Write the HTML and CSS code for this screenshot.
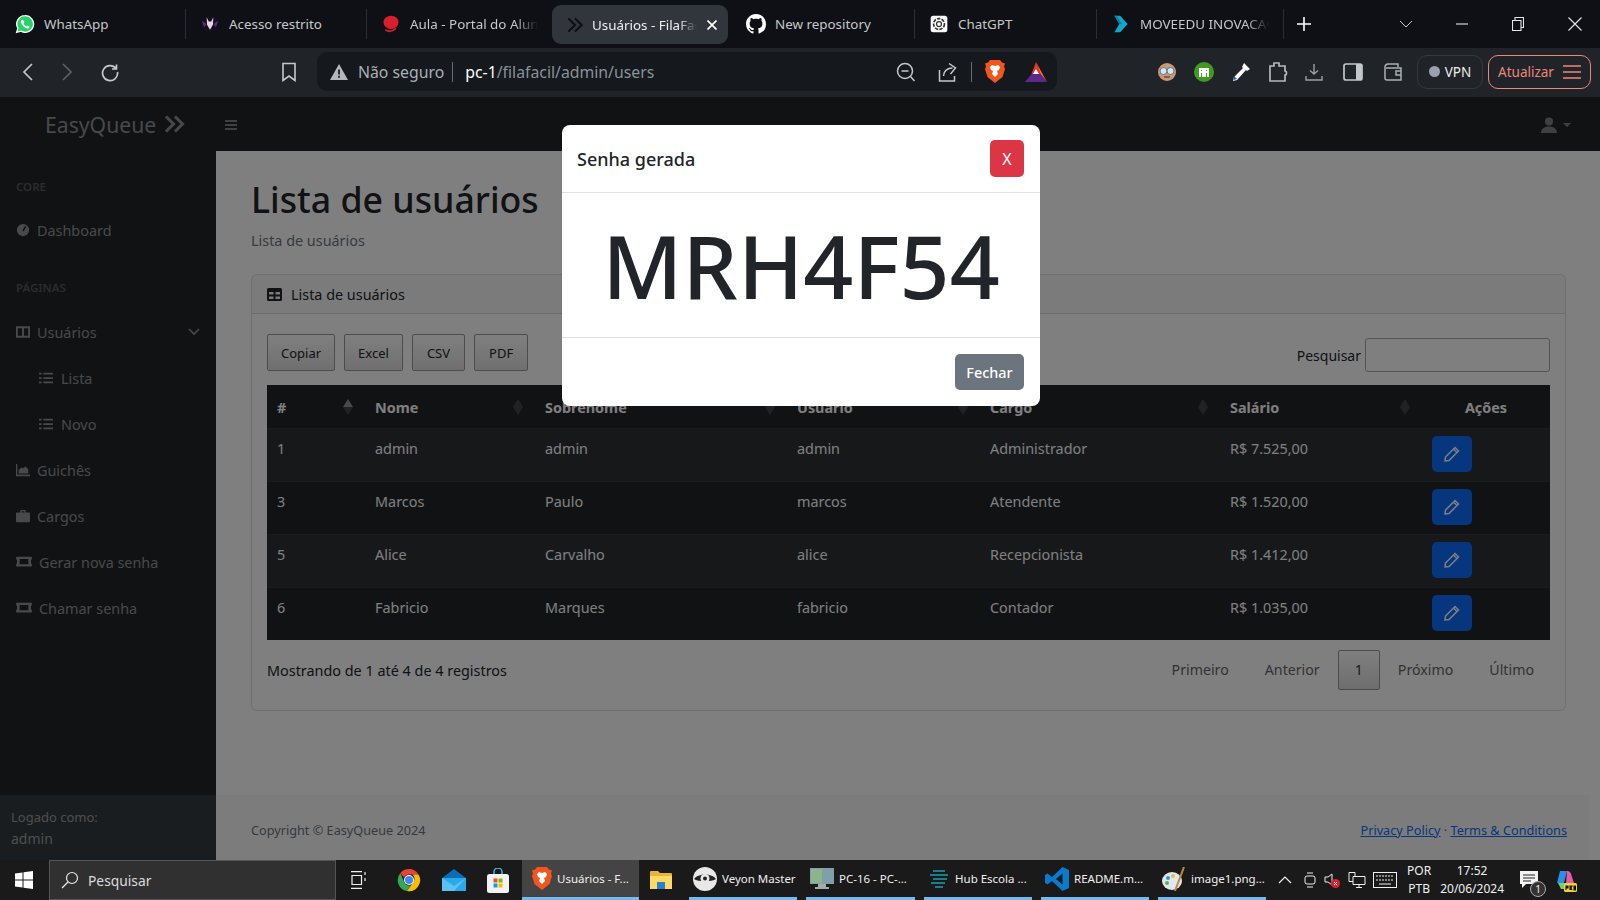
FILE: index.html
```html
<!DOCTYPE html>
<html lang="pt-BR">
<head>
    <meta charset="UTF-8">
    <title>Usuários - FilaFacil</title>
    <link rel="stylesheet" href="styles.css">
</head>
<body>
<div class="tabs">
    <div class="tab tab-first"><svg class="fav" viewBox="0 0 24 24"><path fill="#25d366" stroke="#fff" stroke-width="1.6" d="M12 2a10 10 0 0 0-8.6 15L2 22l5.2-1.4A10 10 0 1 0 12 2z"/><path fill="#fff" d="M8.6 7c-.5 0-1.400.8-1.400 2.300 0 3 3.800 7.500 7.600 8 1.600.2 2.700-.9 2.800-2 0-.4-2.200-1.700-2.600-1.500l-1 1.200c-1.600-.5-3-2-3.700-3.500l.9-1.100c.2-.4-.8-2.900-1.200-2.900z"/></svg><span class="tab-text">WhatsApp</span></div>
    <div class="tab"><svg class="fav" viewBox="0 0 24 24"><circle cx="12" cy="12" r="10" fill="#15101c"/><path fill="#5a2a8a" d="M2 8l6 4-3 4zM22 8l-6 4 3 4z"/><path fill="#e6d8e0" d="M8 4l2.500 5h3L16 4l-.5 9-3.500 6-3.500-6z"/></svg><span class="tab-text">Acesso restrito</span></div>
    <div class="tab"><svg class="fav" viewBox="0 0 24 24"><ellipse cx="12" cy="10" rx="9" ry="8" fill="#d8202c"/><path fill="none" stroke="#d8202c" stroke-width="2" d="M5 19c4 3 9 2 13-2"/></svg><span class="tab-text fade">Aula - Portal do Aluno</span></div>
    <div class="tab active"><svg class="fav" viewBox="0 0 24 24"><path fill="none" stroke="#0c0e12" stroke-width="2.400" d="M4 4l8 8-8 8M12 4l8 8-8 8"/></svg><span class="tab-text fade">Usuários - FilaFacil</span><svg class="tab-close" width="10" height="10" viewBox="0 0 10 10"><path stroke="#fff" stroke-width="1.700" d="M.5.5l9 9M9.500.5l-9 9"/></svg></div>
    <div class="tab tab-wide"><svg class="fav" viewBox="0 0 16 16"><path fill="#fff" d="M8 0C3.580 0 0 3.580 0 8c0 3.540 2.290 6.530 5.470 7.590.4.070.55-.17.55-.38 0-.19-.01-.82-.01-1.490-2.010.37-2.530-.49-2.690-.94-.09-.23-.48-.94-.82-1.130-.28-.15-.68-.52-.01-.53.63-.01 1.080.58 1.230.82.72 1.210 1.870.87 2.330.66.07-.52.28-.87.51-1.070-1.780-.2-3.640-.89-3.640-3.950 0-.87.31-1.590.82-2.150-.08-.2-.36-1.020.08-2.120 0 0 .67-.21 2.200.82.64-.18 1.320-.27 2-.27.68 0 1.360.09 2 .27 1.530-1.040 2.200-.82 2.200-.82.44 1.100.16 1.920.08 2.120.51.56.82 1.270.82 2.150 0 3.070-1.870 3.750-3.650 3.950.29.25.54.73.54 1.480 0 1.070-.01 1.930-.01 2.200 0 .21.15.46.55.38A8.013 8.013 0 0 0 16 8c0-4.420-3.580-8-8-8z"/></svg><span class="tab-text">New repository</span></div>
    <div class="tab"><svg class="fav" viewBox="0 0 24 24"><rect x="2" y="2" width="20" height="20" rx="3" fill="#fff"/><circle cx="12" cy="12" r="6.500" fill="none" stroke="#333" stroke-width="2" stroke-dasharray="4 1.500"/><circle cx="12" cy="12" r="3" fill="none" stroke="#333" stroke-width="1.500"/></svg><span class="tab-text">ChatGPT</span></div>
    <div class="tab"><svg class="fav" viewBox="0 0 24 24"><path fill="#12a5c9" d="M4 2h7l9 10-9 10H4l6-10z"/><path fill="#0b7f9c" d="M4 2h3l6 10H10z"/></svg><span class="tab-text fade">MOVEEDU INOVACAO</span></div>
    <div class="new-tab"><svg width="16" height="16" viewBox="0 0 16 16"><path stroke="#fff" stroke-width="1.600" d="M8 1v14M1 8h14"/></svg></div>
    <div class="win-btns">
        <svg class="chevron-win" width="14" height="8" viewBox="0 0 14 8"><path fill="none" stroke="#c8cacc" d="M1 1l6 6 6-6"/></svg>
        <svg width="12" height="12" viewBox="0 0 12 12"><path stroke="#e6e6e6" stroke-width="1.100" d="M0 6h12"/></svg>
        <svg width="12" height="14" viewBox="0 0 12 14"><path fill="none" stroke="#e6e6e6" stroke-width="1.100" d="M.5 3.500h8.500v10H.5zM3 3.500V.5h8.500v10H9"/></svg>
        <svg width="14" height="14" viewBox="0 0 14 14"><path stroke="#e6e6e6" stroke-width="1.100" d="M.5.5l13 13M13.500.5l-13 13"/></svg>
    </div>
</div>

<div class="toolbar">
    <div class="nav-btns">
        <svg width="12" height="18" viewBox="0 0 12 18"><path fill="none" stroke="#c4c8cc" stroke-width="1.700" d="M10 1L2 9l8 8"/></svg>
        <svg width="12" height="18" viewBox="0 0 12 18"><path fill="none" stroke="#5c6166" stroke-width="1.700" d="M2 1l8 8-8 8"/></svg>
        <svg width="20" height="20" viewBox="0 0 20 20"><path fill="none" stroke="#c4c8cc" stroke-width="1.700" d="M16 6.500A7.500 7.500 0 1 0 17.500 10M16.500 2.500v4.500H12"/></svg>
    </div>
    <svg class="bookmark" width="16" height="20" viewBox="0 0 16 20"><path fill="none" stroke="#c4c8cc" stroke-width="1.600" d="M2 1.500h12v17l-6-4.500-6 4.500z"/></svg>
    <div class="address">
        <svg width="18" height="16" viewBox="0 0 18 16"><path fill="#b4b8bc" d="M9 0l9 16H0z"/><path stroke="#15181c" stroke-width="1.700" d="M9 5.500v5M9 11.800v2"/></svg>
        <span class="not-secure">Não seguro</span>
        <span class="addr-sep"></span>
        <span class="url"><b>pc-1</b>/filafacil/admin/users</span>
        <span class="addr-icons">
            <svg width="20" height="20" viewBox="0 0 20 20"><circle cx="9" cy="9" r="7.500" fill="none" stroke="#c4c8cc" stroke-width="1.500"/><path stroke="#c4c8cc" stroke-width="1.500" d="M5.500 9h7M14.500 14.500l4 4.500"/></svg>
            <svg class="ic-share" width="20" height="20" viewBox="0 0 20 20"><path fill="none" stroke="#c4c8cc" stroke-width="1.500" d="M1.500 8v11h15v-5M5.500 14c0-5 4-8 9-8M11 1.500l6.500 4.500-5 6"/></svg>
            <span class="addr-sep small"></span>
            <svg class="ic-brave" width="20" height="23" viewBox="0 0 20 23"><path fill="#f1561f" d="M5 0h10l2 2.500 3 1-1 3 1 2.500-2.500 8L10 23l-7.500-6L0 9l1-2.500-1-3 3-1z"/><path fill="#fff" d="M10 6l3-1 2 2-1 3-2 1 1 3-3 3-3-3 1-3-2-1-1-3 2-2z"/></svg>
            <svg class="ic-rewards" width="22" height="20" viewBox="0 0 22 20"><path fill="#e8352f" d="M11 0l4.500 12h-9z"/><path fill="#ff6a2b" d="M11 0l11 20-6.500-8z"/><path fill="#5b2a8a" d="M0 20h22l-6.500-8h-9z"/><path fill="#fff" d="M11 7l3 5H8z"/></svg>
        </span>
    </div>
    <div class="extensions">
        <svg width="20" height="20" viewBox="0 0 20 20"><circle cx="10" cy="10" r="9" fill="#c69a78"/><circle cx="6.500" cy="9" r="3.500" fill="#d5e6ee" stroke="#5f7a8a"/><circle cx="13.500" cy="9" r="3.500" fill="#d5e6ee" stroke="#5f7a8a"/><path stroke="#7a4a2a" stroke-width="1.500" d="M7 15h6"/></svg>
        <svg width="20" height="20" viewBox="0 0 20 20"><circle cx="10" cy="10" r="10" fill="#3f9a22"/><path fill="none" stroke="#fff" stroke-width="2" d="M6 15V7h3v8M11 15V7h3v8M6 10h3M11 10h3"/></svg>
        <svg width="20" height="20" viewBox="0 0 20 20"><path fill="#fff" d="M13 1l6 6-3 2-1-1-9 10-4 1 1-4 9-9-1-1z"/><path fill="#2f55c0" d="M3 14l3 3-3.500 1z"/></svg>
        <svg width="20" height="22" viewBox="0 0 20 22"><path fill="none" stroke="#b4b8bc" stroke-width="1.700" d="M2 5h4V2h5v3h6v5c2 0 2 4 0 4v6H2z"/></svg>
        <svg width="18" height="18" viewBox="0 0 18 18"><path fill="none" stroke="#9ca0a4" stroke-width="1.400" d="M9 1v10M5 7.500L9 11l4-3.500M1 13v4h16v-4"/></svg>
        <svg class="ext-gap" width="20" height="18" viewBox="0 0 20 18"><rect x="1" y="1" width="18" height="16" rx="2" fill="none" stroke="#c0c8cc" stroke-width="1.700"/><rect x="13" y="1" width="6" height="16" fill="#c0c8cc"/></svg>
        <svg class="ext-gap" width="20" height="18" viewBox="0 0 20 18"><path fill="none" stroke="#a8b0b4" stroke-width="1.500" d="M2 4a3 3 0 0 1 3-3h10v3M2 4v11a2 2 0 0 0 2 2h14V5H3M18 8h-5v4h5"/></svg>
    </div>
    <div class="vpn"><span class="vpn-dot"></span>VPN</div>
    <div class="update">Atualizar <svg width="18" height="14" viewBox="0 0 18 14"><path stroke="#f0857a" stroke-width="1.600" d="M0 1h18M0 7h18M0 13h18"/></svg></div>
</div>

<div class="viewport">
    <nav class="topnav">
        <div class="brand">EasyQueue <svg width="22" height="18" viewBox="0 0 22 18"><path fill="none" stroke="currentColor" stroke-width="3" d="M2 1.500l7.500 7.500L2 16.500M11 1.500l7.500 7.500-7.500 7.500"/></svg></div>
        <svg class="burger" width="12" height="12" viewBox="0 0 12 12"><path stroke="#808080" stroke-width="1.800" d="M0 2h12M0 6h12M0 10h12"/></svg>
        <div class="user-menu"><svg width="16" height="16" viewBox="0 0 16 16"><circle cx="8" cy="4.500" r="4" fill="#808080"/><path fill="#808080" d="M0 16c0-4 3-6.500 8-6.500s8 2.500 8 6.500z"/></svg><span class="caret"></span></div>
    </nav>
    <div class="layout">
        <aside class="sidebar">
            <div class="side-menu">
                <div class="side-head">CORE</div>
                <a class="side-link"><svg viewBox="0 0 16 16"><circle cx="8" cy="8" r="7" fill="currentColor"/><path stroke="#111" stroke-width="1.500" d="M8 9l3-5"/></svg>Dashboard</a>
                <div class="side-head second">PÁGINAS</div>
                <a class="side-link"><svg viewBox="0 0 16 16"><path fill="none" stroke="currentColor" stroke-width="2.200" d="M1 2.500h14v11H1zM8 3v10"/></svg>Usuários<svg class="side-arrow" viewBox="0 0 12 8"><path fill="none" stroke="currentColor" stroke-width="1.600" d="M1 1l5 5 5-5"/></svg></a>
                <a class="side-link sub"><svg viewBox="0 0 16 16"><path stroke="currentColor" stroke-width="2" d="M0 3h3M5 3h11M0 8h3M5 8h11M0 13h3M5 13h11"/></svg>Lista</a>
                <a class="side-link sub"><svg viewBox="0 0 16 16"><path stroke="currentColor" stroke-width="2" d="M0 3h3M5 3h11M0 8h3M5 8h11M0 13h3M5 13h11"/></svg>Novo</a>
                <a class="side-link"><svg viewBox="0 0 16 16"><path fill="currentColor" d="M0 1h1.500v12H16v2H0zM3 12V8l3-3 2 1 3-2 3 3v5z"/></svg>Guichês</a>
                <a class="side-link"><svg viewBox="0 0 16 16"><path fill="currentColor" d="M5 1h6v3h4a1 1 0 0 1 1 1v9a1 1 0 0 1-1 1H1a1 1 0 0 1-1-1V5a1 1 0 0 1 1-1h4zm1.500 1.500V4h3V2.500z"/></svg>Cargos</a>
                <a class="side-link wide"><svg viewBox="0 0 18 16"><path fill="currentColor" fill-rule="evenodd" d="M1 2h16a1 1 0 0 1 1 1v2h-1v5h1v2a1 1 0 0 1-1 1H1a1 1 0 0 1-1-1v-2h1V5H0V3a1 1 0 0 1 1-1zm3 2.500v6h10v-6z"/></svg>Gerar nova senha</a>
                <a class="side-link wide"><svg viewBox="0 0 18 16"><path fill="currentColor" fill-rule="evenodd" d="M1 2h16a1 1 0 0 1 1 1v2h-1v5h1v2a1 1 0 0 1-1 1H1a1 1 0 0 1-1-1v-2h1V5H0V3a1 1 0 0 1 1-1zm3 2.500v6h10v-6z"/></svg>Chamar senha</a>
            </div>
            <div class="side-footer">
                <div class="logged">Logado como:</div>
                <div>admin</div>
            </div>
        </aside>
        <main class="main">
            <div class="content">
                <h1>Lista de usuários</h1>
                <p class="crumb">Lista de usuários</p>
                <section class="card">
                    <div class="card-head"><svg width="15" height="13" viewBox="0 0 15 13"><path fill="#212529" fill-rule="evenodd" d="M1.500 0h12A1.500 1.500 0 0 1 15 1.500v10a1.500 1.500 0 0 1-1.500 1.500h-12A1.500 1.500 0 0 1 0 11.500v-10A1.500 1.500 0 0 1 1.500 0zM2 4v2.500h4.500V4zm6.500 0v2.500H13V4zM2 8.500V11h4.500V8.500zm6.500 0V11H13V8.500z"/></svg>Lista de usuários</div>
                    <div class="card-body">
                        <div class="dt-top">
                            <div class="dt-buttons">
                                <button class="dt-btn">Copiar</button>
                                <button class="dt-btn">Excel</button>
                                <button class="dt-btn">CSV</button>
                                <button class="dt-btn">PDF</button>
                            </div>
                            <label class="dt-search">Pesquisar <input type="text"></label>
                        </div>
                        <table class="users">
                            <colgroup>
                                <col class="c-id"><col class="c-name"><col class="c-last"><col class="c-user"><col class="c-role"><col class="c-pay"><col>
                            </colgroup>
                            <thead>
                                <tr>
                                    <th class="sort up">#</th>
                                    <th class="sort">Nome</th>
                                    <th class="sort">Sobrenome</th>
                                    <th class="sort">Usuário</th>
                                    <th class="sort">Cargo</th>
                                    <th class="sort">Salário</th>
                                    <th class="center">Ações</th>
                                </tr>
                            </thead>
                            <tbody>
                                <tr>
                                    <td>1</td><td>admin</td><td>admin</td><td>admin</td><td>Administrador</td><td>R$ 7.525,00</td>
                                    <td><button class="edit"><svg width="16" height="16" viewBox="0 0 16 16"><path fill="none" stroke="#fff" stroke-width="1.500" d="M11 1.500l3.500 3.500L5 14.500l-4 .5.500-4zM9.500 3l3.500 3.500"/></svg></button></td>
                                </tr>
                                <tr>
                                    <td>3</td><td>Marcos</td><td>Paulo</td><td>marcos</td><td>Atendente</td><td>R$ 1.520,00</td>
                                    <td><button class="edit"><svg width="16" height="16" viewBox="0 0 16 16"><path fill="none" stroke="#fff" stroke-width="1.500" d="M11 1.500l3.500 3.500L5 14.500l-4 .5.500-4zM9.500 3l3.500 3.500"/></svg></button></td>
                                </tr>
                                <tr>
                                    <td>5</td><td>Alice</td><td>Carvalho</td><td>alice</td><td>Recepcionista</td><td>R$ 1.412,00</td>
                                    <td><button class="edit"><svg width="16" height="16" viewBox="0 0 16 16"><path fill="none" stroke="#fff" stroke-width="1.500" d="M11 1.500l3.500 3.500L5 14.500l-4 .5.500-4zM9.500 3l3.500 3.500"/></svg></button></td>
                                </tr>
                                <tr>
                                    <td>6</td><td>Fabricio</td><td>Marques</td><td>fabricio</td><td>Contador</td><td>R$ 1.035,00</td>
                                    <td><button class="edit"><svg width="16" height="16" viewBox="0 0 16 16"><path fill="none" stroke="#fff" stroke-width="1.500" d="M11 1.500l3.500 3.500L5 14.500l-4 .5.500-4zM9.500 3l3.500 3.500"/></svg></button></td>
                                </tr>
                            </tbody>
                        </table>
                        <div class="dt-bottom">
                            <div>Mostrando de 1 até 4 de 4 registros</div>
                            <div class="pager">
                                <a>Primeiro</a><a>Anterior</a><a class="current">1</a><a>Próximo</a><a>Último</a>
                            </div>
                        </div>
                    </div>
                </section>
            </div>
            <footer class="foot">
                <span>Copyright © EasyQueue 2024</span>
                <span><a href="#">Privacy Policy</a> · <a href="#">Terms &amp; Conditions</a></span>
            </footer>
        </main>
    </div>

    <div class="backdrop"></div>
    <div class="modal">
        <div class="modal-head">
            <span class="modal-title">Senha gerada</span>
            <button class="modal-x">X</button>
        </div>
        <div class="modal-body">MRH4F54</div>
        <div class="modal-foot"><button class="modal-close">Fechar</button></div>
    </div>
</div>

<div class="taskbar">
    <svg class="winlogo" width="18" height="18" viewBox="0 0 18 18"><path fill="#fff" d="M0 2.500L7.500 1.500v7H0zM8.500 1.300L18 0v8.500H8.500zM0 9.500h7.500v7L0 15.500zM8.500 9.500H18V18l-9.500-1.300z"/></svg>
    <div class="task-search"><svg width="18" height="18" viewBox="0 0 18 18"><circle cx="11" cy="7" r="5.500" fill="none" stroke="#e8e8e8" stroke-width="1.200"/><path stroke="#e8e8e8" stroke-width="1.200" d="M7 11l-6 6"/></svg>Pesquisar</div>
    <div class="task-pins">
        <svg class="pin-first" width="16" height="18" viewBox="0 0 16 18"><path fill="none" stroke="#f0f0f0" stroke-width="1.200" d="M0 .6h11M0 17.400h11M1 4.500h9.500v9H1zM14 1v3M14 7v3"/></svg>
        <svg width="24" height="24" viewBox="0 0 24 24"><path fill="#ea4335" d="M12 1a11 11 0 0 1 9.500 5.500H12a5.500 5.500 0 0 0-5 3L3.400 5A11 11 0 0 1 12 1z"/><path fill="#34a853" d="M3.400 5L7.500 15a5.500 5.500 0 0 0 6 2.300L10 23A11 11 0 0 1 3.400 5z"/><path fill="#fbbc05" d="M21.500 6.500A11 11 0 0 1 10 23l5.500-8a5.500 5.500 0 0 0 0-8.500z"/><circle cx="12" cy="12" r="5" fill="#fff"/><circle cx="12" cy="12" r="4" fill="#4285f4"/></svg>
        <svg width="24" height="24" viewBox="0 0 24 24"><path fill="#0b6cb8" d="M12 1L0 10h24z"/><path fill="#29a8ea" d="M0 10h24v13H0z"/><path fill="#7fd4f8" d="M0 10l12 8 12-8-12 13H0z" opacity=".6"/></svg>
        <svg width="22" height="25" viewBox="0 0 22 25"><path fill="none" stroke="#3fb8e6" stroke-width="1.500" d="M7 7V4a4 4 0 0 1 8 0v3"/><rect x="0" y="6" width="22" height="19" rx="2.500" fill="#f2f2f2"/><path fill="#f25022" d="M6.500 10.500h4v4h-4z"/><path fill="#7fba00" d="M11.500 10.500h4v4h-4z"/><path fill="#00a4ef" d="M6.500 15.500h4v4h-4z"/><path fill="#ffb900" d="M11.500 15.500h4v4h-4z"/></svg>
    </div>
    <div class="task-app current app-brave"><svg width="20" height="23" viewBox="0 0 20 23"><path fill="#f1561f" d="M5 0h10l2 2.500 3 1-1 3 1 2.500-2.500 8L10 23l-7.500-6L0 9l1-2.500-1-3 3-1z"/><path fill="#fff" d="M10 6l3-1 2 2-1 3-2 1 1 3-3 3-3-3 1-3-2-1-1-3 2-2z"/></svg>Usuários - F...</div>
    <svg class="explorer" width="22" height="20" viewBox="0 0 22 20"><path fill="#e8b53a" d="M0 2a1 1 0 0 1 1-1h7l2 2h11a1 1 0 0 1 1 1v15H0z"/><path fill="#ffd966" d="M0 6h22v13H0z"/><path fill="#2a7fd0" d="M7 12h8v7H7z"/></svg>
    <div class="task-app app-veyon"><svg width="24" height="24" viewBox="0 0 24 24"><circle cx="12" cy="12" r="12" fill="#e8e8e8"/><path fill="#222" d="M1 12c4-6 18-6 22 0-4 3-18 3-22 0z"/><circle cx="12" cy="11.500" r="4.500" fill="#e8e8e8"/><circle cx="12" cy="11.500" r="2" fill="#222"/></svg>Veyon Master</div>
    <div class="task-app app-pc"><svg width="24" height="22" viewBox="0 0 24 22"><rect width="24" height="16" fill="#7fa0a8"/><rect x="1" y="1" width="11" height="14" fill="#8fb48a"/><path fill="#aaa" d="M8 16h8v3H8zM5 19h14v2H5z"/></svg>PC-16 - PC-...</div>
    <div class="task-app app-hub"><svg width="22" height="22" viewBox="0 0 22 22"><path fill="none" stroke="#1c7d8a" stroke-width="1.800" d="M5 3h12M2 7h18M5 11h14M3 15h14M7 19h8"/></svg>Hub Escola ...</div>
    <div class="task-app app-code"><svg width="24" height="24" viewBox="0 0 24 24"><path fill="#0a7acc" d="M17.500 0L24 3v18l-6.500 3L7 14l-4.500 3.500L0 16V8l2.500-1.500L7 10zM17.500 6.500L11 12l6.500 5.500z"/></svg>README.m...</div>
    <div class="task-app app-paint"><svg width="24" height="24" viewBox="0 0 24 24"><ellipse cx="10" cy="14" rx="10" ry="9" fill="#dfe8ee"/><circle cx="6" cy="11" r="2" fill="#3a8fd8"/><circle cx="11" cy="9" r="2" fill="#e8c03a"/><circle cx="5" cy="16" r="2" fill="#58b04a"/><path stroke="#c08a3a" stroke-width="2" d="M22 0L13 24"/></svg>image1.png...</div>
    <div class="tray">
        <svg class="tray-up" width="14" height="8" viewBox="0 0 14 8"><path fill="none" stroke="#f0f0f0" stroke-width="1.200" d="M1 7l6-6 6 6"/></svg>
        <svg class="tray-tight" width="12" height="18" viewBox="0 0 12 18"><rect x="1" y="5" width="10" height="8" rx="2" fill="none" stroke="#f0f0f0"/><path stroke="#f0f0f0" d="M3 2h6M3 16h6"/></svg>
        <svg class="tray-tight" width="16" height="16" viewBox="0 0 16 16"><path fill="none" stroke="#f0f0f0" d="M1 5h3l4-3v11l-4-3H1z"/><circle cx="11.500" cy="11.500" r="4.500" fill="#e0202a"/><path stroke="#fff" d="M10 10l3 3M13 10l-3 3"/></svg>
        <svg class="tray-net" width="18" height="18" viewBox="0 0 18 18"><path fill="none" stroke="#f0f0f0" d="M5 5.500h12v8H5zM1 1.500h6v4M11 13.500v3M8 16.500h6M1 1.500v9h4"/></svg>
        <svg width="24" height="16" viewBox="0 0 24 16"><rect x=".5" y=".5" width="23" height="15" fill="none" stroke="#f0f0f0"/><path stroke="#f0f0f0" stroke-dasharray="2 1" d="M3 4h18M3 8h18"/><path stroke="#f0f0f0" d="M6 12h12"/></svg>
        <div class="tray-text lang"><div>POR</div><div>PTB</div></div>
        <div class="tray-text clock"><div>17:52</div><div>20/06/2024</div></div>
        <div class="notify"><svg width="18" height="18" viewBox="0 0 18 18"><path fill="#f4f4f4" d="M0 0h18v13H6l-4 4v-4H0z"/><path stroke="#222" d="M3 4h12M3 7h12M3 10h8"/></svg><span class="notify-count">1</span></div>
        <svg width="24" height="24" viewBox="0 0 24 24"><path fill="#2e8fe8" d="M6 3h7l-3 12H3z"/><path fill="#e85aa8" d="M13 3c3 0 4 2 5 6l2 6h-8z"/><path fill="#70d080" d="M4 15h14l-4 6H7z"/><rect x="10" y="15" width="13" height="9" rx="1.500" fill="#f2d22e"/><path stroke="#222" stroke-width="1.200" d="M12 22v-4h2v2h-2M16 22v-4h2l-1 2 1 2M22 18h-2v4h2"/></svg>
    </div>
</div>
</body>
</html>
```
FILE: styles.css
```css
* {
    margin: 0;
    padding: 0;
    box-sizing: border-box;
}

html, body {
    height: 900px;
    overflow: hidden;
}

body {
    display: flex;
    flex-direction: column;
    font-family: "Noto Sans", "Open Sans", sans-serif;
    font-size: 14.4px;
    background-color: #fff;
    color: #212529;
}

button {
    font-family: inherit;
}

/* browser tabs */
.tabs {
    height: 48px;
    background-color: #0e1015;
    display: grid;
    grid-template-columns: 186px 181px 185px 176px 187px 182px 187px 60px 1fr;
    align-items: center;
    color: #c6c8ca;
    font-size: 13.4px;
}

.tab {
    height: 30px;
    display: flex;
    align-items: center;
    gap: 9px;
    padding: 0 14px;
    border-right: 1px solid #2a2d32;
    overflow: hidden;
}

.tab:nth-child(3), .tab:nth-child(4) {
    border-right: none;
}

.tab-first {
    padding-left: 15px;
}

.tab-wide {
    padding-left: 18px;
}

.tab.active {
    height: 39px;
    background-color: #30363b;
    border-radius: 9px;
    color: #f0f0f0;
    margin-top: 1px;
    padding: 0 11px 0 13px;
    gap: 7px;
}

.fav {
    width: 20px;
    height: 20px;
    flex: none;
}

.tab-text {
    white-space: nowrap;
    overflow: hidden;
    flex: 1;
}

.tab-text.fade {
    -webkit-mask-image: linear-gradient(90deg, #000 82%, transparent);
    mask-image: linear-gradient(90deg, #000 82%, transparent);
}

.tab-close {
    flex: none;
    margin-left: 3px;
}

.new-tab {
    padding-left: 12px;
    display: flex;
}

.win-btns {
    display: flex;
    align-items: center;
    justify-content: flex-end;
    gap: 44px;
    padding-right: 18px;
}

.chevron-win {
    margin-right: -1px;
}

/* toolbar */
.toolbar {
    height: 49px;
    padding-bottom: 2px;
    background-color: #202428;
    display: flex;
    align-items: center;
    color: #d0d4d8;
}

.nav-btns {
    display: flex;
    align-items: center;
    gap: 27px;
    margin-left: 22px;
    width: 120px;
}

.bookmark {
    margin-left: 139px;
}

.address {
    margin-left: 20px;
    width: 740px;
    height: 39px;
    background-color: #15181c;
    border-radius: 10px;
    display: flex;
    align-items: center;
    padding: 0 10px 0 13px;
    font-size: 15.8px;
}

.not-secure {
    margin-left: 10px;
    color: #a9b0b6;
}

.addr-sep {
    width: 1px;
    height: 20px;
    background-color: #6a6e72;
    margin: 0 12px 0 8px;
}

.addr-sep.small {
    margin: 0 -1px;
}

.url {
    color: #8b9298;
}

.url b {
    font-weight: 400;
    color: #fff;
}

.addr-icons {
    margin-left: auto;
    display: flex;
    align-items: center;
    gap: 14px;
}

.ic-share {
    margin-left: 8px;
}

.ic-rewards {
    margin-left: 6px;
}

.extensions {
    margin-left: 100px;
    width: 248px;
    display: flex;
    align-items: center;
    gap: 17px;
}

.ext-gap {
    margin-left: 3px;
}

.vpn {
    margin-left: 12px;
    width: 66px;
    height: 34px;
    border: 1px solid #33393d;
    border-radius: 10px;
    display: flex;
    align-items: center;
    justify-content: center;
    gap: 5px;
    font-size: 13.5px;
    color: #eee;
}

.vpn-dot {
    width: 11px;
    height: 11px;
    border-radius: 50%;
    background-color: #9aa0b0;
}

.update {
    margin-left: 5px;
    width: 103px;
    height: 34px;
    border: 1px solid #f0857a;
    border-radius: 10px;
    display: flex;
    align-items: center;
    justify-content: center;
    gap: 9px;
    font-size: 13.5px;
    color: #f0857a;
}

/* the page */
.viewport {
    flex: 1;
    position: relative;
    display: flex;
    flex-direction: column;
    min-height: 0;
}

.topnav {
    height: 54px;
    background-color: #212529;
    display: flex;
    align-items: center;
    flex: none;
}

.brand {
    width: 216px;
    padding-left: 45px;
    font-size: 21.2px;
    color: rgba(255, 255, 255, 0.5);
    display: flex;
    align-items: center;
    gap: 8px;
}

.burger {
    margin-left: 9px;
    margin-top: 1px;
}

.user-menu {
    margin-left: auto;
    margin-right: 29px;
    margin-top: 1px;
    display: flex;
    align-items: center;
    gap: 6px;
}

.caret {
    border-top: 4px solid #808080;
    border-left: 4px solid transparent;
    border-right: 4px solid transparent;
}

.layout {
    flex: 1;
    display: flex;
    min-height: 0;
}

.sidebar {
    width: 216px;
    background-color: #212529;
    color: rgba(255, 255, 255, 0.5);
    display: flex;
    flex-direction: column;
    flex: none;
}

.side-menu {
    flex: 1;
    padding-top: 30px;
}

.side-head {
    height: 12px;
    line-height: 12px;
    padding-left: 16px;
    font-size: 11.5px;
    font-weight: 600;
    color: rgba(255, 255, 255, 0.25);
}

.side-head.second {
    margin-top: 29px;
}

.side-link {
    height: 46px;
    display: flex;
    align-items: center;
    gap: 7px;
    padding-left: 16px;
}

.side-head + .side-link {
    margin-top: 14px;
}

.side-head.second + .side-link {
    margin-top: 15px;
}

.side-link svg {
    width: 14px;
    height: 14px;
    flex: none;
}

.side-link.sub {
    padding-left: 39px;
    gap: 8px;
}

.side-link.wide svg {
    width: 16px;
}

.side-link .side-arrow {
    width: 12px;
    height: 8px;
    margin-left: auto;
    margin-right: 16px;
}

.side-footer {
    height: 65px;
    background-color: #343a40;
    padding: 12px 11px 0;
    font-size: 14px;
    line-height: 22px;
}

.logged {
    font-size: 13px;
    line-height: 21px;
}

.main {
    flex: 1;
    display: flex;
    flex-direction: column;
    min-width: 0;
}

.content {
    flex: 1;
    padding: 0 34px 0 35px;
}

h1 {
    font-size: 35.7px;
    font-weight: 500;
    line-height: 48px;
    margin-top: 24px;
}

.crumb {
    margin-top: 8px;
    line-height: 20px;
    color: #6c757d;
}

.card {
    margin-top: 23px;
    height: 437px;
    border: 1px solid rgba(0, 0, 0, 0.125);
    border-radius: 6px;
}

.card-head {
    height: 39px;
    background-color: rgba(0, 0, 0, 0.03);
    border-bottom: 1px solid rgba(0, 0, 0, 0.125);
    display: flex;
    align-items: center;
    gap: 9px;
    padding-left: 15px;
}

.card-body {
    padding: 20px 15px 0;
}

.dt-top {
    display: flex;
    justify-content: space-between;
    height: 51px;
}

.dt-buttons {
    display: flex;
    gap: 9px;
    height: 37px;
}

.dt-btn {
    padding: 0 13px;
    border: 1px solid #999;
    border-radius: 2px;
    background: linear-gradient(#fff, #e0e0e0);
    color: #212529;
    font-size: 13px;
}

.dt-btn:nth-child(n+3) {
    padding: 0 14px;
}

.dt-search {
    display: flex;
    align-items: center;
    gap: 4px;
    height: 34px;
    margin-top: 4px;
    font-size: 14px;
}

.dt-search input {
    width: 185px;
    height: 34px;
    border: 1px solid #aaa;
    border-radius: 3px;
    background-color: #fff;
}

.users {
    width: 100%;
    table-layout: fixed;
    border-collapse: collapse;
    background-color: #212529;
    color: #fff;
}

.c-id { width: 98px; }
.c-name { width: 170px; }
.c-last { width: 252px; }
.c-user { width: 193px; }
.c-role { width: 240px; }
.c-pay { width: 202px; }

.users th {
    height: 43px;
    padding: 2px 10px 0;
    text-align: left;
    font-weight: 700;
    position: relative;
}

.users th.center {
    text-align: center;
}

/* datatables sort arrows */
.sort::before, .sort::after {
    content: "";
    position: absolute;
    right: 12px;
    border-left: 5px solid transparent;
    border-right: 5px solid transparent;
    opacity: 0.15;
}

.sort::before {
    top: 14px;
    border-bottom: 8px solid #fff;
}

.sort::after {
    top: 22px;
    border-top: 8px solid #fff;
}

.sort.up::before {
    opacity: 0.5;
}

.users td {
    height: 53px;
    padding: 8px 10px;
    vertical-align: top;
    border-top: 1px solid #32383e;
    line-height: 24px;
}

.users td:last-child {
    padding-top: 7px;
}

.users tbody tr:nth-child(odd) {
    background-color: #2c3034;
}

.edit {
    display: flex;
    align-items: center;
    justify-content: center;
    width: 40px;
    height: 36px;
    background-color: #0d6efd;
    border: none;
    border-radius: 5px;
}

.dt-bottom {
    display: flex;
    justify-content: space-between;
    align-items: center;
    margin-top: 10px;
    height: 40px;
}

.pager {
    display: flex;
    align-items: center;
    color: #666;
    font-size: 14.2px;
}

.pager a {
    padding: 0 17px;
    line-height: 38px;
    border: 1px solid transparent;
}

.pager a:last-child {
    padding-right: 15px;
}

.pager .current {
    padding: 0 16px;
    border: 1px solid #979797;
    border-radius: 2px;
    background: linear-gradient(#fff, #dcdcdc);
    color: #333;
}

.foot {
    height: 65px;
    margin-right: 11px;
    background-color: #f8f9fa;
    display: flex;
    align-items: center;
    justify-content: space-between;
    padding: 5px 22px 0 35px;
    font-size: 12.7px;
    color: #6c757d;
    flex: none;
}

.foot a {
    color: #0d6efd;
}

/* modal */
.backdrop {
    position: absolute;
    inset: 0;
    background-color: rgba(0, 0, 0, 0.5);
}

.modal {
    position: absolute;
    left: 562px;
    top: 28px;
    width: 478px;
    background-color: #fff;
    border-radius: 8px;
    display: flex;
    flex-direction: column;
}

.modal-head {
    height: 68px;
    border-bottom: 1px solid #dee2e6;
    display: flex;
    align-items: center;
    justify-content: space-between;
    padding: 0 16px 0 15px;
}

.modal-title {
    font-size: 18px;
    font-weight: 500;
}

.modal-x {
    width: 34px;
    height: 37px;
    background-color: #dc3545;
    color: #fff;
    border: none;
    border-radius: 5px;
    font-size: 16px;
}

.modal-body {
    height: 145px;
    border-bottom: 1px solid #dee2e6;
    text-align: center;
    font-size: 87.5px;
    font-weight: 500;
    line-height: 144px;
}

.modal-foot {
    height: 68px;
    display: flex;
    align-items: center;
    justify-content: flex-end;
    padding-right: 16px;
}

.modal-close {
    width: 69px;
    height: 36px;
    background-color: #6c757d;
    color: #fff;
    border: none;
    border-radius: 5px;
    font-size: 14.4px;
    font-weight: 500;
}

/* windows taskbar */
.taskbar {
    height: 40px;
    background-color: #1a1a1a;
    display: flex;
    align-items: center;
    color: #f0f0f0;
    font-size: 11.5px;
}

.taskbar svg {
    flex: none;
}

.winlogo {
    margin-left: 15px;
}

.task-search {
    margin-left: 16px;
    width: 287px;
    height: 40px;
    flex: none;
    background-color: #303030;
    border: 1px solid #555;
    display: flex;
    align-items: center;
    gap: 9px;
    padding-left: 11px;
    font-size: 13.8px;
    color: #dcdcdc;
}

.task-pins {
    margin-left: 15px;
    width: 171px;
    flex: none;
    display: flex;
    align-items: center;
    gap: 21px;
}

.pin-first {
    margin-right: 9px;
}

.task-app {
    height: 40px;
    width: 108px;
    flex: none;
    display: flex;
    align-items: center;
    gap: 5px;
    white-space: nowrap;
    border-bottom: 3px solid #76b9ed;
    padding-left: 4px;
    margin-left: 9px;
}

.task-app.current {
    background-color: #444;
}

.task-app.app-brave { width: 117px; padding-left: 10px; margin-left: 0; }
.task-app.app-veyon { margin-left: 17px; }
.task-app.app-pc { width: 109px; }

.explorer {
    margin-left: 11px;
}

.tray {
    margin-left: auto;
    display: flex;
    align-items: center;
    gap: 9px;
    padding-right: 22px;
}

.tray-up {
    margin-right: 3px;
}

.tray-tight {
    margin-right: -1px;
}

.tray-net {
    margin-right: -2px;
}

.tray-text {
    text-align: center;
    font-size: 12px;
    line-height: 18px;
}

.lang {
    margin-left: 1px;
}

.notify {
    position: relative;
    display: flex;
    margin: 0 7px 0 7px;
}

.notify-count {
    position: absolute;
    right: -8px;
    bottom: -8px;
    width: 16px;
    height: 16px;
    border-radius: 50%;
    background-color: #333;
    border: 1px solid #aaa;
    font-size: 10px;
    line-height: 14px;
    text-align: center;
}
```
